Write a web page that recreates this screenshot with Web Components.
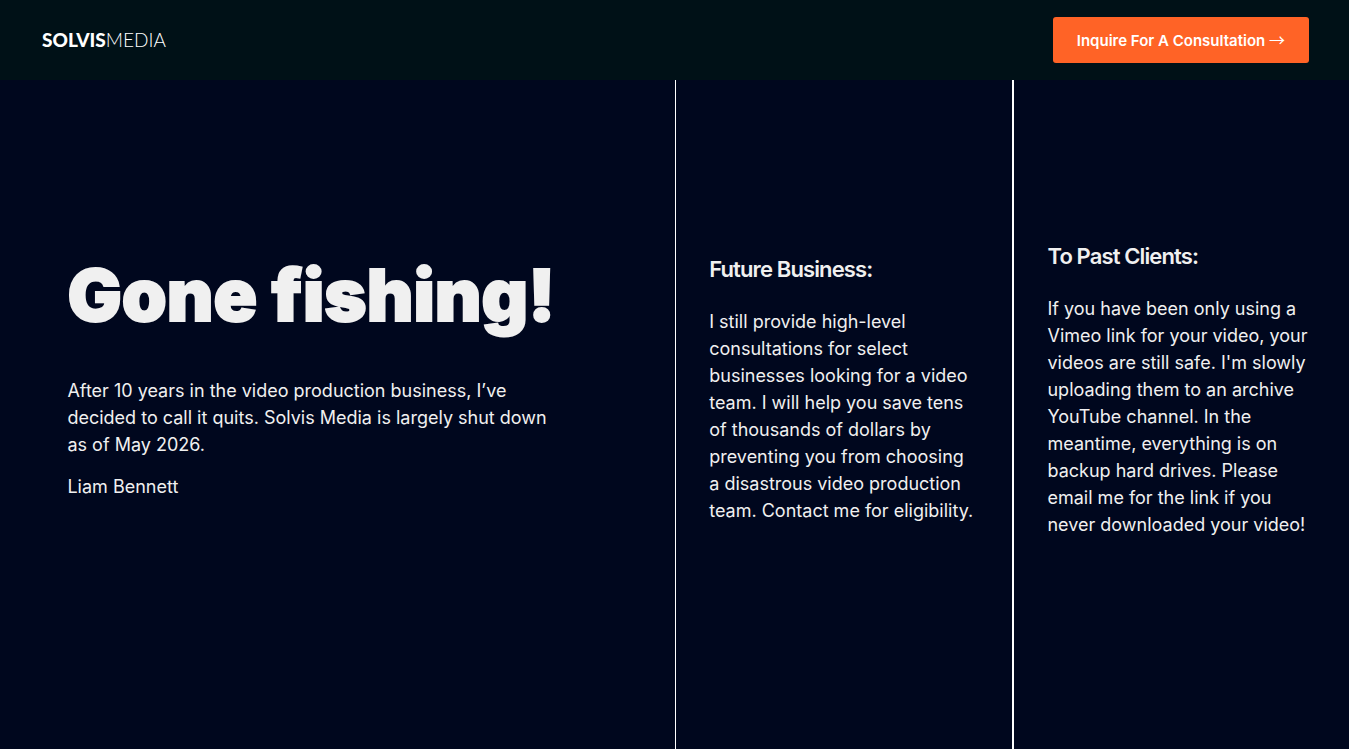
<!DOCTYPE html>
<html lang="en">
<head>
<meta charset="utf-8">
<meta name="viewport" content="width=device-width, initial-scale=1">
<title>Solvis Media</title>
<style>
  html, body { height: 100%; margin: 0; }
  body { background: #00071e; color: #f0f0f0; font: 400 18px/27px Inter, "Liberation Sans", sans-serif; }
</style>
</head>
<body>
<solvis-page></solvis-page>

<template id="header-template">
  <style>
    :host { display: flex; align-items: center; justify-content: space-between; box-sizing: border-box; min-height: 80px; padding: 0 40px; background: #001117; }
    .logo { padding: 0 2px; color: #fff; text-decoration: none; font: 300 19px/24px Lato, sans-serif; }
    .logo b { font-weight: 900; }
    button { border: 0; border-radius: 3px; padding: 0 24px; height: 46px; background: #ff6326; color: #fff; font: 600 15px/22px Inter, sans-serif; cursor: pointer; }
    .arrow { font: 400 16px/22px "Noto Sans CJK JP", sans-serif; }
  </style>
  <a class="logo" href="#"><b>SOLVIS</b>MEDIA</a>
  <button type="button"><slot></slot> <span class="arrow">→</span></button>
</template>

<template id="panel-template">
  <style>
    :host { display: flex; flex-direction: column; justify-content: center; box-sizing: border-box; min-width: 0; padding: 20px 10% 71px; }
    :host([divided]) { border-left: var(--divider, 1px) solid #fff; }
    h2 { margin: 0 0 24px; font: 600 22px/30px Inter, sans-serif; letter-spacing: -0.04em; }
  </style>
  <h2><slot name="title"></slot></h2>
  <slot></slot>
</template>

<template id="hero-template">
  <style>
    :host { display: flex; flex-direction: column; justify-content: center; box-sizing: border-box; min-width: 0; padding: 20px 18% 90px 10%; }
    h1 { margin: 0 0 46px; white-space: nowrap; font: 900 72px/72px Inter, sans-serif; -webkit-text-stroke: 2px currentColor; }
    @media (max-width: 800px) { h1 { white-space: normal; } }
  </style>
  <h1><slot name="title"></slot></h1>
  <slot></slot>
</template>

<template id="page-template">
  <style>
    :host { display: flex; flex-direction: column; min-height: 100%; }
    main { flex: 1; display: grid; grid-template-columns: 2fr 1fr 1fr; }
    p { margin: 0; }
    p + p { margin-top: 15px; }
    .past { --divider: 2px; }
    @media (max-width: 800px) { main { grid-template-columns: 1fr; } }
  </style>
  <solvis-header>Inquire For A Consultation</solvis-header>
  <main>
    <solvis-hero>
      <span slot="title">Gone fishing!</span>
      <p>After 10 years in the video production business, I’ve decided to call it quits. Solvis Media is largely shut down as of May 2026.</p>
      <p>Liam Bennett</p>
    </solvis-hero>
    <solvis-panel divided>
      <span slot="title">Future Business:</span>
      <p>I still provide high-level consultations for select businesses looking for a video team. I will help you save tens of thousands of dollars by preventing you from choosing a disastrous video production team. Contact me for eligibility.</p>
    </solvis-panel>
    <solvis-panel class="past" divided>
      <span slot="title">To Past Clients:</span>
      <p>If you have been only using a Vimeo link for your video, your videos are still safe. I'm slowly uploading them to an archive YouTube channel. In the meantime, everything is on backup hard drives. Please email me for the link if you never downloaded your video!</p>
    </solvis-panel>
  </main>
</template>

<script>
  const define = (name, templateId) => customElements.define(name, class extends HTMLElement {
    constructor() {
      super();
      this.attachShadow({ mode: "open" }).append(document.getElementById(templateId).content.cloneNode(true));
    }
  });
  define("solvis-header", "header-template");
  define("solvis-panel", "panel-template");
  define("solvis-hero", "hero-template");
  define("solvis-page", "page-template");
</script>
</body>
</html>
